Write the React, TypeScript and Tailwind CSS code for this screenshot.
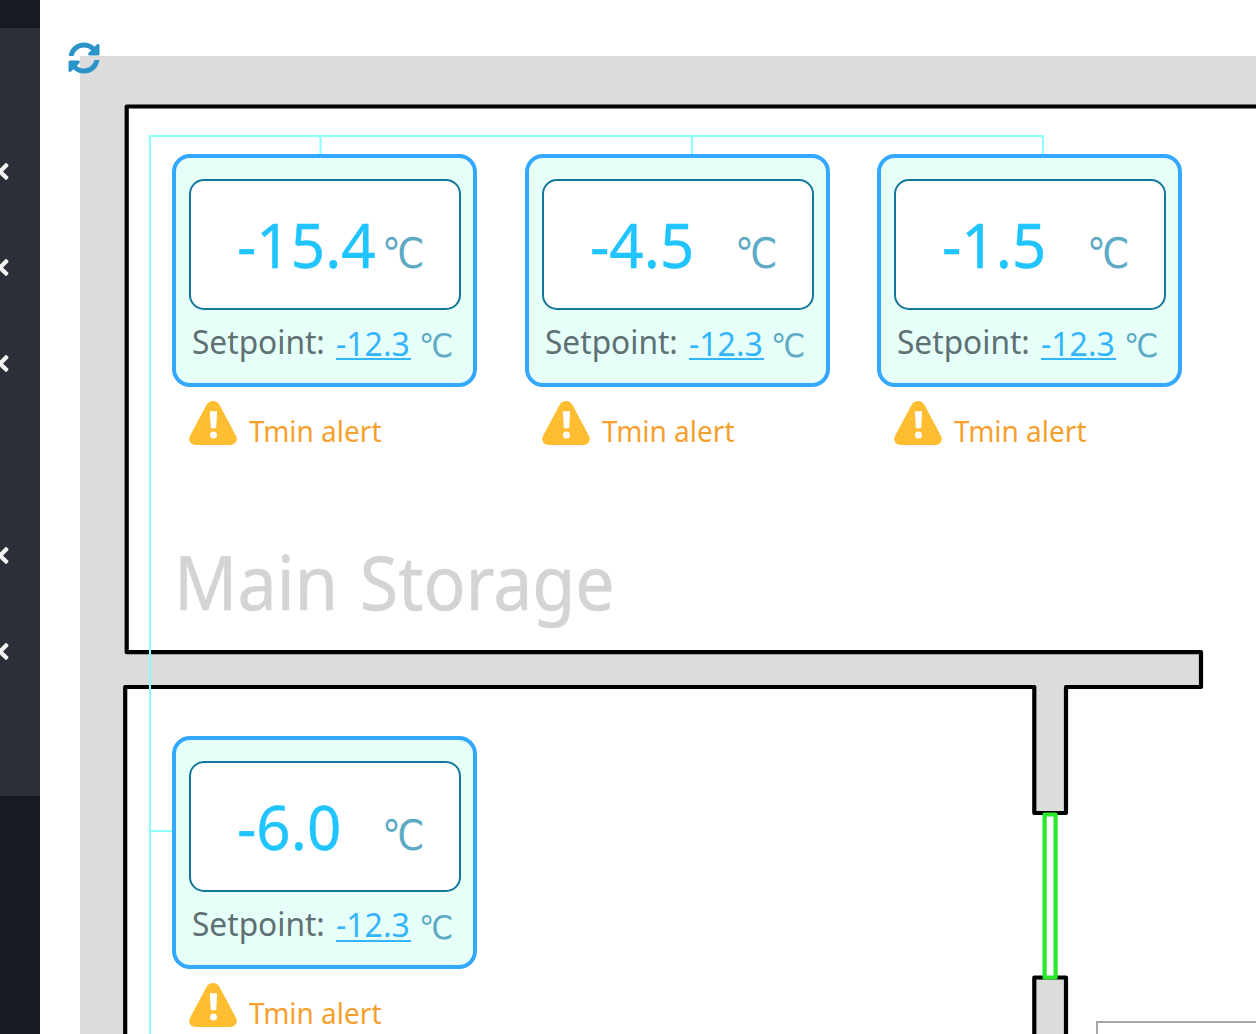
import React from "react";
import { FaAngleLeft, FaSyncAlt } from "react-icons/fa";

type Sensor = { id: string; x: number; y: number; value: string };

const sensors: Sensor[] = [
  { id: "s1", x: 172, y: 154, value: "-15.4" },
  { id: "s2", x: 524.8, y: 154, value: "-4.5" },
  { id: "s3", x: 877.4, y: 154, value: "-1.5" },
  { id: "s4", x: 172, y: 735.6, value: "-6.0" },
];

const menu = [true, true, true, false, true, true];

function Sidebar() {
  return (
    <aside className="w-10 shrink-0 bg-[#161a22] pt-7">
      <div className="h-[768px] bg-[#2d3038] pt-24">
        {menu.map((hasArrow, i) => (
          <div key={i} className="flex h-24 items-center">
            {hasArrow && <FaAngleLeft className="-mt-px -ml-2 h-[27px] w-[22px] text-[#f4f4f4]" />}
          </div>
        ))}
      </div>
    </aside>
  );
}

function FloorPlan() {
  return (
    <svg className="absolute inset-0" width="1216" height="1034" viewBox="40 0 1216 1034" fill="none">
      <rect x="80" y="56" width="1176" height="978" fill="#dcdcdc" />
      <path
        d="M1270 106.5H126.7V652.2H1201V687H1066V813H1034.3V687H125.2V1050H1270Z"
        fill="#fff"
        stroke="#000"
        strokeWidth="4.2"
        strokeLinejoin="round"
      />
      <rect x="1034.3" y="977.5" width="31.7" height="80" fill="#dcdcdc" stroke="#000" strokeWidth="4.2" strokeLinejoin="round" />
      <rect x="1044.6" y="814.5" width="11" height="163" fill="#fff" stroke="#2ae82a" strokeWidth="4.2" strokeLinejoin="round" />
      <rect x="1097" y="1022" width="180" height="30" fill="#fff" stroke="#a6a6a6" strokeWidth="2" />
      <path d="M150 1040V136H1043V156M320.5 136V156M692 136V156M150 831H174" stroke="#8cffff" strokeWidth="2.1" />
    </svg>
  );
}

function AlertIcon() {
  return (
    <svg className="h-[44px] w-[48px] shrink-0" viewBox="0 0 48 44">
      <path
        d="M17.6 3.7C20.4-1.1 27.6-1.1 30.4 3.7L46.8 34.5C49.5 39.5 46.3 44 41.4 44H6.6C1.7 44-1.5 39.5 1.2 34.5Z"
        fill="#ffbe32"
      />
      <path d="M20.8 10.2H28.1L27.2 27.3H21.8Z" fill="#fff" />
      <circle cx="24.5" cy="34" r="3.5" fill="#fff" />
    </svg>
  );
}

function SensorCard({ sensor }: { sensor: Sensor }) {
  return (
    <div className="absolute w-[305px]" style={{ left: sensor.x - 40, top: sensor.y }}>
      <div className="h-[233px] rounded-[18px] border-4 border-[#32a8ff] bg-[#e6fff9] px-[13px] pt-[21px]">
        <div className="flex h-[131px] w-[272px] items-start rounded-[15px] border-2 border-[#13789c] bg-white pt-[18px] pl-[46px]">
          <div className="w-[145px] shrink-0">
            <span className="inline-block origin-left scale-x-[0.97] text-[62px] leading-[90px] text-[#20c4ff] [-webkit-text-stroke:0.4px_#20c4ff]">{sensor.value}</span>
          </div>
          <span className="mt-[10px] inline-block origin-left scale-x-[0.9] font-['DejaVu_Sans',sans-serif] text-[42px] leading-[90px] text-[#5caac4]">℃</span>
        </div>
        <div className="flex h-[64px] items-start pl-[3px] leading-[64px]">
          <span className="-mt-px w-[144px] shrink-0">
            <span className="inline-block origin-left scale-x-[0.95] text-[33.3px] text-[#5f7073]">Setpoint:</span>
          </span>
          <span className="mt-[14px] flex h-[36px] w-[75px] shrink-0 items-center border-b-2 border-[#32b4ff] pt-[5px] text-[#32b4ff]">
            <span className="inline-block origin-left scale-x-[0.97] text-[33px]">-12.3</span>
          </span>
          <span className="mt-[4px] ml-[7.5px] inline-block origin-left scale-x-[0.94] font-['DejaVu_Sans',sans-serif] text-[32.5px] text-[#5caac4]">℃</span>
        </div>
      </div>
      <div className="flex pt-[14px] pl-[17px]">
        <AlertIcon />
        <span className="mt-[8px] ml-[12px] inline-block origin-left scale-x-[0.965] text-[29px] leading-[44px] text-[#f5a02d]">Tmin alert</span>
      </div>
    </div>
  );
}

export default function App() {
  return (
    <div className="flex h-[1034px] w-[1256px] overflow-hidden bg-white font-['Noto_Sans',sans-serif] whitespace-nowrap">
      <Sidebar />
      <main className="relative flex-1">
        <FloorPlan />
        <FaSyncAlt className="absolute top-[42px] left-7 size-8 text-[#2a94c8]" />
        {sensors.map((s) => (
          <SensorCard key={s.id} sensor={s} />
        ))}
        <div className="absolute top-[527px] left-[134px] origin-left scale-x-[0.926] text-[75.5px] leading-[108px] text-[#d4d4d4] [-webkit-text-stroke:0.6px_#d4d4d4] [word-spacing:4px]">Main Storage</div>
      </main>
    </div>
  );
}
